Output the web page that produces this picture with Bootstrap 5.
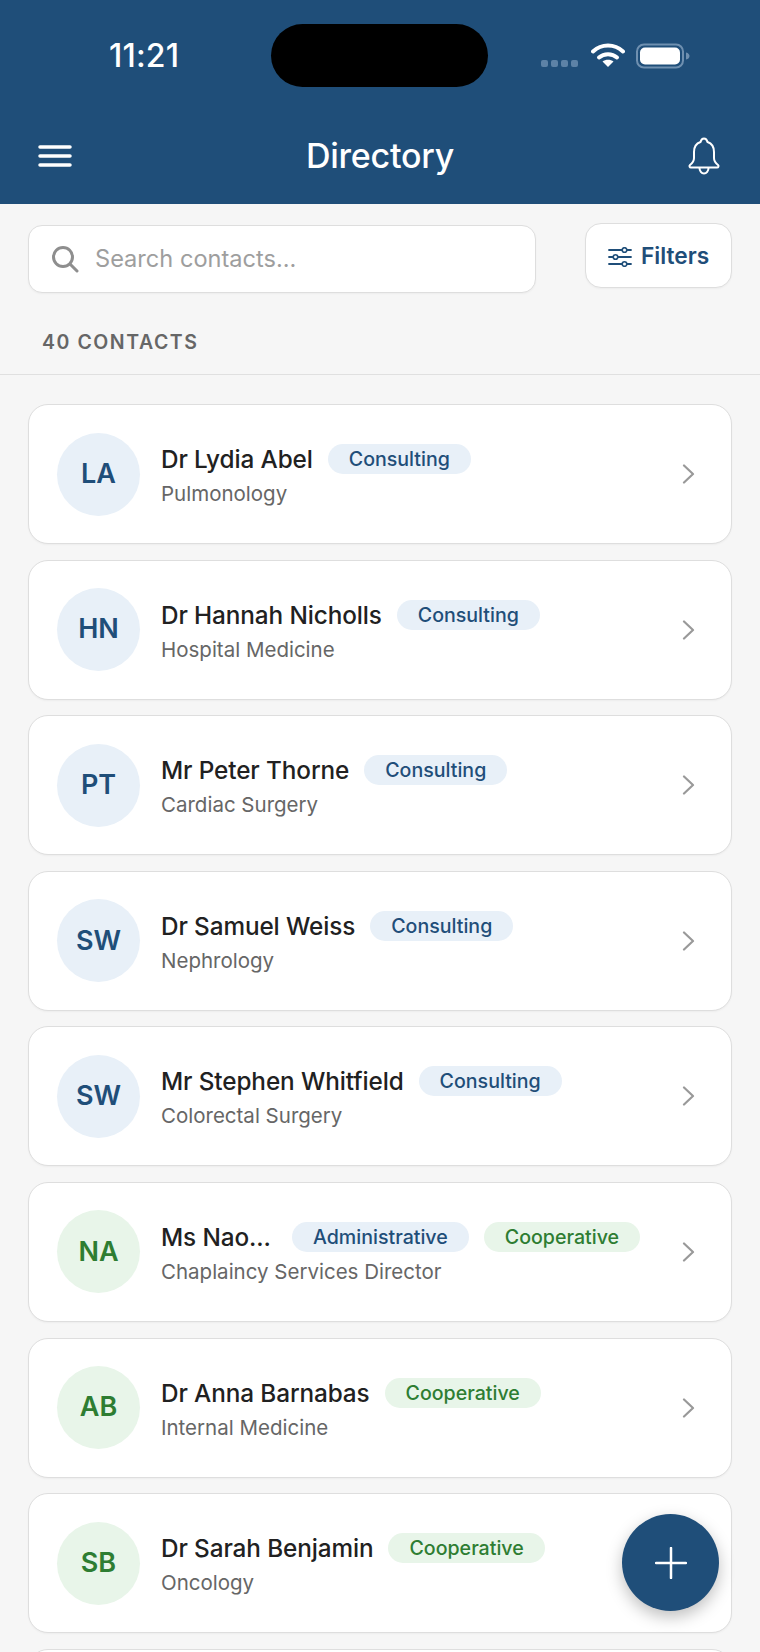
<!DOCTYPE html>
<html>
<head>
  <meta charset="UTF-8">
  <title>Directory</title>
  <link href="https://cdn.jsdelivr.net/npm/bootstrap@5.3.3/dist/css/bootstrap.min.css" rel="stylesheet">
  <style>
    html, body { height: 100%; }
    body {
      background-color: #f6f6f6;
      font-family: Inter, "Liberation Sans", sans-serif;
      overflow: hidden;
    }
    .app-screen { height: 1652px; overflow: hidden; position: relative; }
    .app-header { background-color: #1f4e79; height: 204px; color: #fff; }
    .status-row { height: 110px; padding: 24px 70px 0 109px; }
    .status-time { font-size: 32px; font-weight: 500; width: 162px; line-height: 63px; letter-spacing: .2px; }
    .island { width: 217px; height: 63px; background: #000; border-radius: 32px; }
    .status-icons { margin-left: auto; height: 63px; }
    .sig-dot { width: 7px; height: 7px; border-radius: 2px; background: #5d82a6; margin-left: 3px; align-self: flex-end; margin-bottom: 20px; }
    .wifi-icon { margin: -2px 11px 0 13px; }
    .nav-row { height: 94px; padding: 0 40px 2px 38px; }
    .nav-title { font-size: 34px; font-weight: 500; letter-spacing: -.25px; line-height: 1; }
    .search-box {
      width: 508px; height: 68px; margin-top: 2px;
      background: #fff; border: 1.5px solid #dedede; border-radius: 14px;
      padding-left: 22px; gap: 16px; box-shadow: 0 1px 2px rgba(0,0,0,.04);
    }
    .search-box input { border: 0; outline: 0; background: transparent; font-size: 23.6px; padding: 0; flex: 1; min-width: 0; color: #333; font-family: inherit; }
    .search-box input::placeholder { color: #9e9e9e; opacity: 1; }
    .filter-btn {
      width: 147px; height: 65px; padding: 2px 0 0 !important;
      background: #fff; border: 1.5px solid #dedede; border-radius: 16px;
      color: #1f4e79; font-size: 22.7px; font-weight: 600; gap: 9px; box-shadow: 0 1px 2px rgba(0,0,0,.04);
    }
    .filter-btn:hover { background: #fff; color: #1f4e79; border-color: #dedede; }
    .tools-row { padding: 19px 28px 0; }
    .count-row { height: 82px; padding: 37px 42px 0; border-bottom: 1.5px solid #e0e0e0; }
    .count-label { font-size: 19.5px; font-weight: 600; letter-spacing: 1.55px; color: #666; line-height: 1.3; }
    .contact-list { padding: 29px 28px 0; gap: 15.6px; }
    .contact-card {
      height: 140px; flex: none; padding: 0 35px 0 28px;
      background: #fff; border: 1.5px solid #dedede; border-radius: 20px; gap: 21px;
      box-shadow: 0 1px 2px rgba(0,0,0,.04);
    }
    .avatar-round { width: 83px; height: 83px; flex: none; border-radius: 50%; font-size: 27px; font-weight: 600; }
    .avatar-blue { background: #e8f0f8; color: #1f4e79; }
    .avatar-green { background: #e8f5e9; color: #2e7d32; }
    .contact-text { padding-top: 4px; }
    .contact-line { gap: 15px; }
    .contact-name { font-size: 24.3px; font-weight: 500; color: #212121; line-height: 30px; letter-spacing: -.1px; }
    .name-cut { width: 116px; flex: none; }
    .contact-sub { font-size: 20.5px; color: #666; line-height: 28px; margin-top: 6px; }
    .tag-pill { height: 30px; padding: 0 21px; border-radius: 15px; font-size: 19.6px; font-weight: 500; line-height: 30px; }
    .tag-blue { background: #e8f0f8; color: #1f4e79; }
    .tag-green { background: #e8f5e9; color: #2e7d32; }
    .fab-add {
      position: absolute; left: 622px; top: 1514px;
      width: 97px; height: 97px; border-radius: 50%;
      background: #1f4e79; box-shadow: 0 6px 16px rgba(0,0,0,.25);
    }
    .fab-add:hover { background: #1f4e79; }
  </style>
</head>
<body>
  <div class="app-screen d-flex flex-column">
    <!-- Header -->
    <header class="app-header flex-shrink-0">
      <div class="status-row d-flex">
        <div class="status-time">11:21</div>
        <div class="island"></div>
        <div class="status-icons d-flex align-items-center">
          <span class="sig-dot"></span><span class="sig-dot"></span><span class="sig-dot"></span><span class="sig-dot"></span>
          <svg class="wifi-icon" width="34" height="26" viewBox="0 0 34 26">
            <path d="M2 9.500C10.500 1.500 23.500 1.500 32 9.500" fill="none" stroke="#fff" stroke-width="4" stroke-linecap="round"/>
            <path d="M8 15.500C13 11 21 11 26 15.500" fill="none" stroke="#fff" stroke-width="4" stroke-linecap="round"/>
            <path d="M17 25L11.500 19.500C14.500 17 19.500 17 22.500 19.500Z" fill="#fff"/>
          </svg>
          <svg width="54" height="26" viewBox="0 0 54 26">
            <rect x="1" y="1.500" width="46" height="23" rx="7" fill="none" stroke="#6f90b0" stroke-width="2"/>
            <rect x="4" y="4.500" width="40" height="17" rx="5" fill="#fff"/>
            <path d="M50 9.500C52.500 10 53.500 11.500 53.500 13C53.500 14.500 52.500 16 50 16.500Z" fill="#6f90b0"/>
          </svg>
        </div>
      </div>
      <div class="nav-row d-flex align-items-center justify-content-between">
        <svg width="34" height="24" viewBox="0 0 34 24">
          <path d="M2 3H32M2 12H32M2 21H32" stroke="#fff" stroke-width="3.500" stroke-linecap="round"/>
        </svg>
        <div class="nav-title">Directory</div>
        <svg width="32" height="38" viewBox="0 0 32 38">
          <path d="M16 1.500C18 1.500 19 3 19.500 5C24 6.500 26 10.500 26 15V21C26 24 28 26.500 30 28C31 29 30.500 30.500 29 30.500H3C1.500 30.500 1 29 2 28C4 26.500 6 24 6 21V15C6 10.500 8 6.500 12.500 5C13 3 14 1.500 16 1.500Z" fill="none" stroke="#fff" stroke-width="2"/>
          <path d="M11.500 31C11.500 34 13.500 36.500 16 36.500C18.500 36.500 20.500 34 20.500 31" fill="none" stroke="#fff" stroke-width="2"/>
        </svg>
      </div>
    </header>

    <!-- Search and filters -->
    <div class="tools-row d-flex justify-content-between align-items-start flex-shrink-0">
      <div class="search-box d-flex align-items-center">
        <svg width="28" height="28" viewBox="0 0 28 28">
          <circle cx="12" cy="12" r="9.500" fill="none" stroke="#8e8e8e" stroke-width="3"/>
          <path d="M19 19L26 26" stroke="#8e8e8e" stroke-width="3" stroke-linecap="round"/>
        </svg>
        <input type="text" placeholder="Search contacts...">
      </div>
      <button class="btn filter-btn d-flex align-items-center justify-content-center" type="button">
        <svg width="24" height="20" viewBox="0 0 24 20">
          <path d="M1 3H14M19 3H23M1 10H5M10 10H23M1 17H14M19 17H23" stroke="#1f4e79" stroke-width="1.800" stroke-linecap="round"/>
          <circle cx="16.500" cy="3" r="2.300" fill="none" stroke="#1f4e79" stroke-width="1.600"/>
          <circle cx="7.500" cy="10" r="2.300" fill="none" stroke="#1f4e79" stroke-width="1.600"/>
          <circle cx="16.500" cy="17" r="2.300" fill="none" stroke="#1f4e79" stroke-width="1.600"/>
        </svg>
        Filters
      </button>
    </div>

    <div class="count-row flex-shrink-0">
      <div class="count-label">40 CONTACTS</div>
    </div>

    <!-- Contacts -->
    <div class="contact-list d-flex flex-column">
      <div class="contact-card d-flex align-items-center">
        <div class="avatar-round avatar-blue d-flex align-items-center justify-content-center">LA</div>
        <div class="contact-text flex-grow-1">
          <div class="contact-line d-flex align-items-center"><span class="contact-name">Dr Lydia Abel</span><span class="tag-pill tag-blue">Consulting</span></div>
          <div class="contact-sub">Pulmonology</div>
        </div>
        <svg width="14" height="20" viewBox="0 0 14 20"><path d="M2 1.500L11 10L2 18.500" fill="none" stroke="#999" stroke-width="2.200" stroke-linecap="round" stroke-linejoin="round"/></svg>
      </div>
      <div class="contact-card d-flex align-items-center">
        <div class="avatar-round avatar-blue d-flex align-items-center justify-content-center">HN</div>
        <div class="contact-text flex-grow-1">
          <div class="contact-line d-flex align-items-center"><span class="contact-name">Dr Hannah Nicholls</span><span class="tag-pill tag-blue">Consulting</span></div>
          <div class="contact-sub">Hospital Medicine</div>
        </div>
        <svg width="14" height="20" viewBox="0 0 14 20"><path d="M2 1.500L11 10L2 18.500" fill="none" stroke="#999" stroke-width="2.200" stroke-linecap="round" stroke-linejoin="round"/></svg>
      </div>
      <div class="contact-card d-flex align-items-center">
        <div class="avatar-round avatar-blue d-flex align-items-center justify-content-center">PT</div>
        <div class="contact-text flex-grow-1">
          <div class="contact-line d-flex align-items-center"><span class="contact-name">Mr Peter Thorne</span><span class="tag-pill tag-blue">Consulting</span></div>
          <div class="contact-sub">Cardiac Surgery</div>
        </div>
        <svg width="14" height="20" viewBox="0 0 14 20"><path d="M2 1.500L11 10L2 18.500" fill="none" stroke="#999" stroke-width="2.200" stroke-linecap="round" stroke-linejoin="round"/></svg>
      </div>
      <div class="contact-card d-flex align-items-center">
        <div class="avatar-round avatar-blue d-flex align-items-center justify-content-center">SW</div>
        <div class="contact-text flex-grow-1">
          <div class="contact-line d-flex align-items-center"><span class="contact-name">Dr Samuel Weiss</span><span class="tag-pill tag-blue">Consulting</span></div>
          <div class="contact-sub">Nephrology</div>
        </div>
        <svg width="14" height="20" viewBox="0 0 14 20"><path d="M2 1.500L11 10L2 18.500" fill="none" stroke="#999" stroke-width="2.200" stroke-linecap="round" stroke-linejoin="round"/></svg>
      </div>
      <div class="contact-card d-flex align-items-center">
        <div class="avatar-round avatar-blue d-flex align-items-center justify-content-center">SW</div>
        <div class="contact-text flex-grow-1">
          <div class="contact-line d-flex align-items-center"><span class="contact-name">Mr Stephen Whitfield</span><span class="tag-pill tag-blue">Consulting</span></div>
          <div class="contact-sub">Colorectal Surgery</div>
        </div>
        <svg width="14" height="20" viewBox="0 0 14 20"><path d="M2 1.500L11 10L2 18.500" fill="none" stroke="#999" stroke-width="2.200" stroke-linecap="round" stroke-linejoin="round"/></svg>
      </div>
      <div class="contact-card d-flex align-items-center">
        <div class="avatar-round avatar-green d-flex align-items-center justify-content-center">NA</div>
        <div class="contact-text flex-grow-1">
          <div class="contact-line d-flex align-items-center"><span class="contact-name name-cut">Ms Nao...</span><span class="tag-pill tag-blue">Administrative</span><span class="tag-pill tag-green">Cooperative</span></div>
          <div class="contact-sub">Chaplaincy Services Director</div>
        </div>
        <svg width="14" height="20" viewBox="0 0 14 20"><path d="M2 1.500L11 10L2 18.500" fill="none" stroke="#999" stroke-width="2.200" stroke-linecap="round" stroke-linejoin="round"/></svg>
      </div>
      <div class="contact-card d-flex align-items-center">
        <div class="avatar-round avatar-green d-flex align-items-center justify-content-center">AB</div>
        <div class="contact-text flex-grow-1">
          <div class="contact-line d-flex align-items-center"><span class="contact-name">Dr Anna Barnabas</span><span class="tag-pill tag-green">Cooperative</span></div>
          <div class="contact-sub">Internal Medicine</div>
        </div>
        <svg width="14" height="20" viewBox="0 0 14 20"><path d="M2 1.500L11 10L2 18.500" fill="none" stroke="#999" stroke-width="2.200" stroke-linecap="round" stroke-linejoin="round"/></svg>
      </div>
      <div class="contact-card d-flex align-items-center">
        <div class="avatar-round avatar-green d-flex align-items-center justify-content-center">SB</div>
        <div class="contact-text flex-grow-1">
          <div class="contact-line d-flex align-items-center"><span class="contact-name">Dr Sarah Benjamin</span><span class="tag-pill tag-green">Cooperative</span></div>
          <div class="contact-sub">Oncology</div>
        </div>
      </div>
      <div class="contact-card"></div>
    </div>

    <button class="btn fab-add d-flex align-items-center justify-content-center p-0" type="button" aria-label="Add">
      <svg width="32" height="32" viewBox="0 0 32 32"><path d="M16 1V31M1 16H31" stroke="#fff" stroke-width="2.500" stroke-linecap="round"/></svg>
    </button>
  </div>

  <script src="https://cdn.jsdelivr.net/npm/bootstrap@5.3.3/dist/js/bootstrap.bundle.min.js"></script>
</body>
</html>
